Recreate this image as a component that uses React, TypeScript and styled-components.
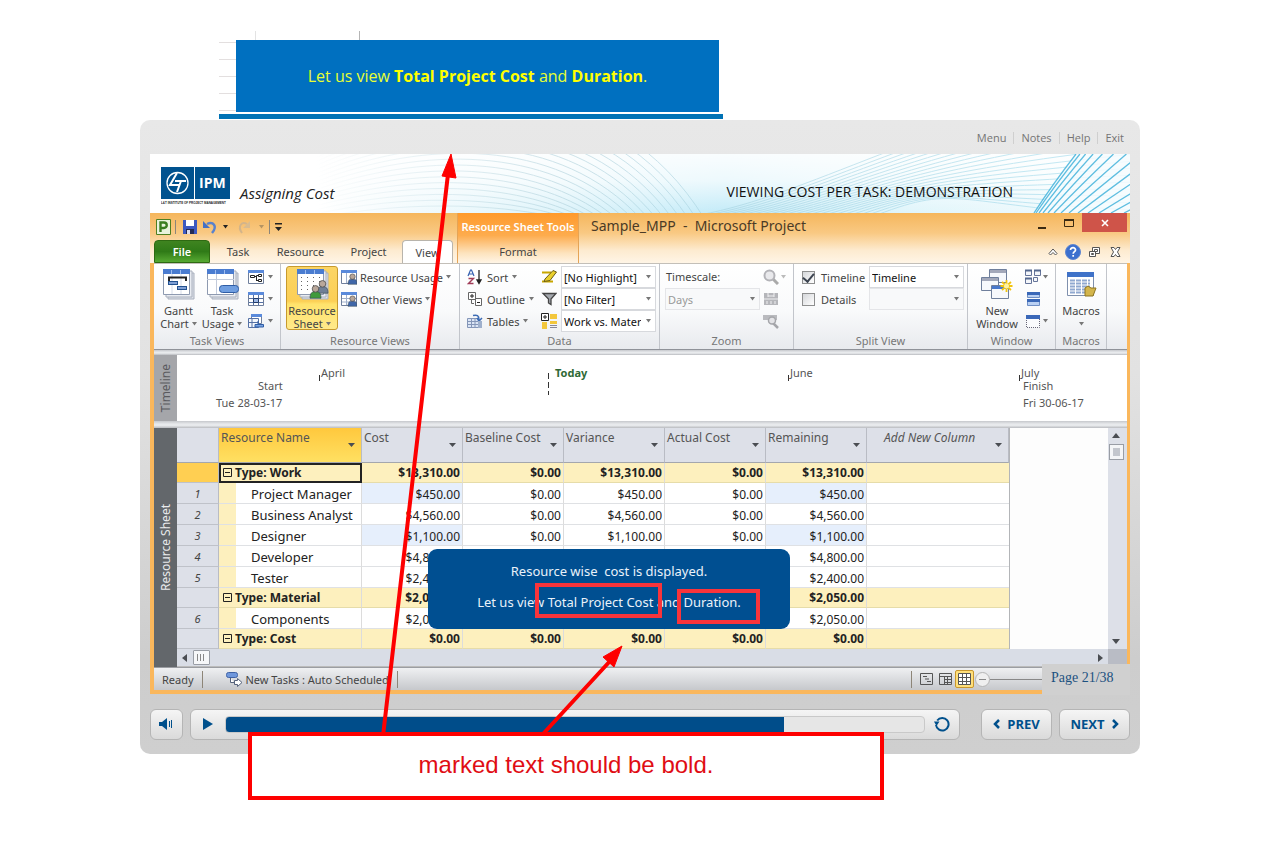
import React from "react";
import styled, { createGlobalStyle, css } from "styled-components";

const ui = `"Noto Sans", "Open Sans", sans-serif`;

const GlobalStyle = createGlobalStyle`
  * { box-sizing: border-box; }
  body { margin: 0; background: #fff; font-family: ${ui}; font-size: 11px; color: #444; }
  button, select, input { font: inherit; color: inherit; margin: 0; padding: 0; border: 0; background: none; }
  svg { display: block; flex: none; }
  h1, h2, p { margin: 0; font-weight: 400; }
`;

const Stage = styled.main`
  position: relative;
  width: 1000px;
  max-width: 100%;
  margin: 0 auto;
  padding: 31px 0 64px;
`;

/* ---------- banner above the player ---------- */
const BannerStrip = styled.section`
  width: 504px;
  max-width: 100%;
  margin: 0 0 1px 79px;
  padding: 9px 4px 0 17px;
  background:
    linear-gradient(#e3e3e3, #e3e3e3) 36px 0 / 1px 10px no-repeat,
    linear-gradient(#b5b5b5, #b5b5b5) 140px 0 / 1px 10px no-repeat,
    repeating-linear-gradient(#fff 0 16px, #e3dfdf 16px 17px) 0 -5px / 17px 86px no-repeat;
  border-bottom: 5px solid #0072b5;
`;
const BannerBox = styled.p`
  height: 72px;
  margin-bottom: 2px;
  background: #0070c0;
  color: #e8ff33;
  display: flex;
  align-items: center;
  justify-content: center;
  white-space: pre;
  font-size: 16px;
  font-family: "Open Sans", sans-serif;
  b { color: #ffff00; }
`;

/* ---------- player shell ---------- */
const Player = styled.section`
  height: 634px;
  padding: 0 10px;
  border-radius: 10px;
  background: linear-gradient(#e8e8e8, #e2e2e2 40%, #cdcdcd 85%, #cfcfcf);
`;
const TopNav = styled.nav`
  height: 34px;
  display: flex;
  align-items: center;
  justify-content: flex-end;
  padding: 2px 6px 0 0;
  a {
    color: #757575;
    text-decoration: none;
    font: 11px/12px "Open Sans", sans-serif;
    padding: 0 7px;
    border-left: 1px solid #cfcfcf;
  }
  a:first-child { border: 0; }
  a:last-child { padding-right: 0; }
`;
const SlideHeader = styled.header`
  position: relative;
  height: 59px;
  background: #fff;
  overflow: hidden;
  display: flex;
  align-items: flex-start;
  padding: 13px 117px 0 11px;
`;
const HeaderArt = styled.svg`
  position: absolute;
  inset: 0;
  width: 100%;
  height: 100%;
`;
const LogoWrap = styled.div`
  position: relative;
  width: 70px;
`;
const CourseName = styled.h1`
  position: relative;
  margin: 16px 0 0 9px;
  font: italic 15px/20px "Open Sans", sans-serif;
  color: #222;
`;
const SlideTitle = styled.h2`
  position: relative;
  margin: 15px 0 0 auto;
  font: 14px/20px "Open Sans", sans-serif;
  color: #111;
`;

/* ---------- Project window ---------- */
const AppWindow = styled.section`
  height: 481px;
  padding: 0 3px 3px 4px;
  background: #fab75c;
  display: flex;
  flex-direction: column;
`;
const Chrome = styled.div`
  display: flex;
  height: 50px;
  margin: 0 -3px 0 -4px;
  padding: 0 3px 0 4px;
  background: linear-gradient(#f5b65c, #f9c983 40%, #fdebd0 75%, #fff5e6);
`;
const ChromeLeft = styled.div`
  width: 303px;
  display: flex;
  flex-direction: column;
`;
const QuickBar = styled.div`
  height: 27px;
  display: flex;
  align-items: center;
  padding-left: 2px;
  button { display: flex; }
`;
const Bar = styled.i<{ h?: number; m?: number; push?: boolean }>`
  width: 1px;
  height: ${(p) => p.h ?? 14}px;
  margin: 0 ${(p) => p.m ?? 4}px;
  margin-left: ${(p) => (p.push ? "auto" : "")};
  background: #8d8578;
`;
const Tabs = styled.div`
  height: 23px;
  display: flex;
`;
const Tab = styled.button<{ w: number; kind?: "file" | "on" }>`
  width: ${(p) => p.w}px;
  height: 23px;
  ${(p) =>
    p.kind === "file" &&
    css`
      color: #fff;
      font-weight: 600;
      border-radius: 4px 4px 0 0;
      border: 1px solid #2e6a12;
      background: linear-gradient(#3f8420, #2f7a17 50%, #57a932);
    `}
  ${(p) =>
    p.kind === "on" &&
    css`
      border: 1px solid #b8b4ac;
      border-bottom: 0;
      border-radius: 4px 4px 0 0;
      background: #fff;
    `}
`;
const Contextual = styled.div`
  width: 122px;
  border: 1px solid #e5a456;
  border-width: 0 1px;
  background: linear-gradient(#ff9a2b, #fdac4e 45%, #fde3bd 80%, #fff5e6);
  display: flex;
  flex-direction: column;
  align-items: center;
  strong {
    font-size: 11px;
    font-weight: 600;
    line-height: 27px;
    color: #fff;
    white-space: nowrap;
  }
`;
const ChromeRight = styled.div`
  flex: 1;
  display: flex;
  flex-direction: column;
`;
const TitleRow = styled.div`
  display: flex;
  height: 27px;
  align-items: flex-start;
  padding-left: 12px;
  span {
    font-size: 14px;
    line-height: 26px;
    color: #4a3a26;
    white-space: pre;
    flex: 1;
  }
`;
const WinBtn = styled.button<{ $close?: boolean }>`
  width: ${(p) => (p.$close ? 45 : 27)}px;
  height: 19px;
  display: flex;
  align-items: center;
  justify-content: center;
  background: ${(p) => (p.$close ? "#cf5449" : "none")};
`;
const ToolRow = styled.div`
  display: flex;
  justify-content: flex-end;
  align-items: center;
  gap: 7px;
  height: 23px;
  padding-right: 4px;
  button { display: flex; }
`;

const Ribbon = styled.div`
  display: flex;
  height: 87px;
  border-top: 1px solid #c3bfb8;
  border-bottom: 1px solid #8f9299;
  background: linear-gradient(#fff, #f9fafb 55%, #e8eaee);
`;
const Group = styled.div<{ w: number }>`
  width: ${(p) => p.w}px;
  padding-top: 2px;
  border-right: 1px solid #c2c5cb;
  display: flex;
  flex-direction: column;
`;
const GroupBody = styled.div<{ pad?: number; gap?: number }>`
  height: 66px;
  display: flex;
  padding-left: ${(p) => p.pad ?? 0}px;
  gap: ${(p) => p.gap ?? 0}px;
`;
const GroupName = styled.div`
  text-align: center;
  line-height: 17px;
  color: #777;
`;
const Big = styled.button<{ w: number; $on?: boolean }>`
  width: ${(p) => p.w}px;
  height: 64px;
  display: flex;
  flex-direction: column;
  align-items: center;
  padding-top: 2px;
  line-height: 13px;
  white-space: nowrap;
  svg { margin-bottom: 4px; }
  svg.caret { margin: 0; }
  ${(p) =>
    p.$on &&
    css`
      border: 1px solid #c79a2e;
      border-radius: 3px;
      padding-top: 1px;
      background: linear-gradient(#fbd565, #fccf55 55%, #ffe36c 60%, #ffe98a);
    `}
`;
const Inline = styled.span`
  display: flex;
  align-items: center;
  gap: 3px;
  min-height: 13px;
`;
const Stack = styled.div<{ w?: number; ml?: number }>`
  display: flex;
  flex-direction: column;
  width: ${(p) => (p.w ? p.w + "px" : "auto")};
  margin-left: ${(p) => p.ml ?? 0}px;
`;
const Small = styled.button<{ gap?: number }>`
  height: 22px;
  display: flex;
  align-items: center;
  gap: ${(p) => p.gap ?? 4}px;
  white-space: nowrap;
`;
const Slot = styled.div`
  height: 22px;
  line-height: 22px;
  padding-left: 1px;
`;
const SelectWrap = styled.label<{ $dim?: boolean }>`
  width: 95px;
  height: 22px;
  display: grid;
  align-items: center;
  border: 1px solid ${(p) => (p.$dim ? "#e4e5e8" : "#d7d9dd")};
  background: ${(p) => (p.$dim ? "#f8f9fa" : "#fff")};
  color: ${(p) => (p.$dim ? "#999" : "#111")};
  select, svg { grid-area: 1 / 1; }
  select {
    appearance: none;
    width: 100%;
    padding: 0 14px 0 2px;
    overflow: hidden;
  }
  svg { justify-self: end; margin-right: 4px; pointer-events: none; }
`;
const Check = styled.label`
  height: 22px;
  display: flex;
  align-items: center;
  gap: 6px;
  input {
    appearance: none;
    width: 13px;
    height: 13px;
    border: 1px solid #8e8f8f;
    background: linear-gradient(135deg, #d5d7da, #fff);
    display: grid;
    place-items: center;
  }
  input:checked::after {
    content: "";
    width: 5px;
    height: 9px;
    margin-top: -2px;
    border: solid #3c4450;
    border-width: 0 2px 2px 0;
    rotate: 40deg;
  }
`;

const Gutter = styled.div<{ h: number }>`
  height: ${(p) => p.h}px;
  background: linear-gradient(#c6c8cc, #e4e6e9 40%, #eceef0 60%, #b9bbbf);
`;
const Pane = styled.div<{ h: number }>`
  display: flex;
  height: ${(p) => p.h}px;
  background: #fff;
`;
const PaneTab = styled.div<{ $dark?: boolean }>`
  width: 23px;
  display: flex;
  align-items: center;
  justify-content: center;
  background: ${(p) => (p.$dark ? "#63676b" : "#a5a6aa")};
  color: ${(p) => (p.$dark ? "#e9eaec" : "#5a5a5e")};
  font-size: 12px;
  span { writing-mode: vertical-rl; rotate: 180deg; }
`;
const TimeCanvas = styled.div`
  position: relative;
  flex: 1;
`;
const Mark = styled.span<{ x: number; y: number; $today?: boolean }>`
  position: absolute;
  left: ${(p) => p.x}px;
  top: ${(p) => p.y}px;
  line-height: 14px;
  white-space: nowrap;
  color: ${(p) => (p.$today ? "#2f6a35" : "#555")};
  font-weight: ${(p) => (p.$today ? 700 : 400)};
`;
const Tick = styled.i<{ x: number; h: number }>`
  position: absolute;
  left: ${(p) => p.x}px;
  top: ${(p) => (p.h > 10 ? 18 : 20)}px;
  width: 1px;
  height: ${(p) => p.h}px;
  background: repeating-linear-gradient(#333 0 6px, transparent 6px 9px);
`;

const SheetArea = styled.div`
  flex: 1;
  display: flex;
  flex-direction: column;
  background: #fdfdfd;
`;
const SheetMain = styled.div`
  display: flex;
  height: 221px;
`;
const TableHolder = styled.div`
  flex: 1;
  overflow: hidden;
`;
const Table = styled.table`
  width: 833px;
  table-layout: fixed;
  border-collapse: separate;
  border-spacing: 0;
  border-right: 1px solid #b3b5b8;
  color: #222;
  th, td { padding: 0; white-space: nowrap; overflow: hidden; }
`;
const HeadCell = styled.th<{ $hot?: boolean; $add?: boolean }>`
  height: 35px;
  border-right: 1px solid #b9bcc4;
  border-bottom: 1px solid #a4a7ad;
  background: ${(p) => (p.$hot ? "linear-gradient(#ffc83d, #ffe062)" : "#dde0e8")};
  font-weight: 400;
  font-size: 12px;
  font-style: ${(p) => (p.$add ? "italic" : "normal")};
  color: #555;
  vertical-align: top;
  div {
    display: flex;
    justify-content: space-between;
    padding: 2px 6px 0 ${(p) => (p.$add ? 17 : 2)}px;
    line-height: 16px;
  }
  svg { margin-top: 13px; }
`;
const NumCell = styled.th<{ $hot?: boolean }>`
  background: ${(p) => (p.$hot ? "#ffcf52" : "#dde0e8")};
  border-right: 1px solid #b9bcc4;
  border-bottom: 1px solid #bfc2c9;
  font-weight: 400;
  font-style: italic;
  font-size: 11px;
  color: #444;
`;
const NameCell = styled.th<{ $group?: boolean; $active?: boolean }>`
  text-align: left;
  border-right: 1px solid #dcdcdc;
  border-bottom: 1px solid ${(p) => (p.$group ? "#e6dca9" : "#dfe1e4")};
  font-size: ${(p) => (p.$group ? 12 : 13)}px;
  font-weight: ${(p) => (p.$group ? 700 : 400)};
  line-height: 18px;
  background: ${(p) => (p.$group ? "#fdf0be" : "linear-gradient(90deg, #fdf0be 17px, #fff 17px)")};
  outline: ${(p) => (p.$active ? "2px solid #222" : "none")};
  outline-offset: -2px;
  div {
    display: flex;
    align-items: center;
    gap: 3px;
    padding-left: ${(p) => (p.$group ? 4 : 32)}px;
    padding-top: ${(p) => (p.$group ? 0 : 1)}px;
  }
`;
const MoneyCell = styled.td<{ $group?: boolean; $blue?: boolean; $last?: boolean }>`
  text-align: right;
  border-right: ${(p) => (p.$last ? "0" : "1px solid #dcdcdc")};
  border-bottom: 1px solid ${(p) => (p.$group ? "#e6dca9" : "#dfe1e4")};
  font-size: 12px;
  line-height: 17px;
  font-weight: ${(p) => (p.$group ? 700 : 400)};
  background: ${(p) => (p.$group ? "#fdf0be" : p.$blue ? "#e6effc" : "#fff")};
  && {
    padding-right: 2px;
    padding-top: ${(p) => (p.$group ? 0 : 2)}px;
  }
`;
const Row = styled.tr<{ $group?: boolean }>`
  height: ${(p) => (p.$group ? 20 : 21)}px;
`;
const VScroll = styled.div`
  width: 19px;
  padding: 5px 3px 5px 0;
  display: flex;
  flex-direction: column;
  align-items: center;
  gap: 6px;
  background: #dde0e8;
  svg:last-child { margin-top: auto; }
`;
const ThumbV = styled.i`
  width: 15px;
  height: 16px;
  border: 1px solid #999da5;
  background: #c3c6cd content-box;
  padding: 3px;
  box-shadow: inset 0 0 0 3px #f4f5f7;
`;
const HScroll = styled.div`
  height: 18px;
  display: flex;
  align-items: center;
  padding: 0 24px 0 5px;
  gap: 6px;
  background: linear-gradient(#b9bcc5, #b9bcc5) right / 19px 100% no-repeat, #d9dde6;
  border-bottom: 1px solid #bbb;
  svg:last-child { margin-left: auto; }
`;
const ThumbH = styled.i`
  width: 17px;
  height: 15px;
  border: 1px solid #999da5;
  border-radius: 1px;
  padding: 3px;
  background: repeating-linear-gradient(90deg, #888 0 1px, #f6f7f9 1px 3px) content-box, #f6f7f9;
`;
const Status = styled.div`
  height: 23px;
  display: flex;
  align-items: center;
  padding: 0 85px 0 8px;
  border-top: 1px solid #9b9da2;
  background: linear-gradient(#eff0f2, #c6c8cc);
  white-space: nowrap;
`;
const ViewBtn = styled.button<{ $on?: boolean }>`
  width: 19px;
  height: 18px;
  display: flex;
  align-items: center;
  justify-content: center;
  border: ${(p) => (p.$on ? "1px solid #c9972c" : "0")};
  border-radius: 2px;
  background: ${(p) => (p.$on ? "#ffdf7a" : "none")};
`;
const Zoomer = styled.i`
  width: 52px;
  height: 1px;
  background: #888;
`;

/* ---------- player controls ---------- */
const Controls = styled.div`
  display: flex;
  align-items: center;
  height: 60px;
`;
const pill = css`
  height: 31px;
  border: 1px solid #b5b5b5;
  border-radius: 6px;
  background: linear-gradient(#f5f5f5, #dadada);
  display: flex;
  align-items: center;
  justify-content: center;
`;
const Pill = styled.button<{ w: number; ml?: number }>`
  ${pill}
  width: ${(p) => p.w}px;
  margin-left: ${(p) => p.ml ?? 0}px;
  gap: 7px;
  color: #00508c;
  font: 700 13px/16px "Open Sans", sans-serif;
`;
const Seek = styled.div`
  ${pill}
  flex: 1;
  margin: 0 21px 0 7px;
  padding: 0 9px 0 12px;
  button { display: flex; }
`;
const SeekBar = styled.input`
  && {
    appearance: none;
    flex: 1;
    min-width: 0;
    height: 17px;
    margin: 0 9px 0 12px;
    border: 1px solid #c9c9c9;
    border-radius: 4px;
    background: linear-gradient(90deg, #004d8a 80%, #e6e6e6 80%);
  }
  &::-webkit-slider-thumb { appearance: none; width: 1px; height: 1px; }
`;

/* ---------- things that lie over the player ---------- */
const PageBox = styled.div`
  position: absolute;
  left: 902px;
  top: 664px;
  width: 88px;
  height: 31px;
  padding: 5px 9px;
  background: #d0d0d0;
  color: #1c5180;
  font: 14px/17px "Liberation Serif", serif;
`;
const Popup = styled.div`
  position: absolute;
  left: 288px;
  top: 549px;
  width: 362px;
  height: 80px;
  border-radius: 9px;
  background: #004f91;
  color: #eaf2fa;
  text-align: center;
  white-space: pre;
  padding: 7px 0;
  font: 13px/31px "Noto Sans", sans-serif;
`;
const Marker = styled.i<{ x: number; y: number; w: number }>`
  position: absolute;
  left: ${(p) => p.x}px;
  top: ${(p) => p.y}px;
  width: ${(p) => p.w}px;
  height: 35px;
  border: 4px solid #f9343b;
`;
const Arrows = styled.svg`
  position: absolute;
  left: 0;
  top: 0;
  pointer-events: none;
`;
const Callout = styled.p`
  position: absolute;
  left: 108px;
  top: 732px;
  width: 636px;
  height: 68px;
  border: 4px solid #fe0000;
  background: #fff;
  color: #e00d14;
  text-align: center;
  font: 24px/58px "Liberation Sans", sans-serif;
`;

/* ---------- icons ---------- */
const Caret = ({ c = "#777" }: { c?: string }) => (
  <svg className="caret" width="5" height="4" viewBox="0 0 5 4"><path d="M0 0h5L2.500 3.500z" fill={c} /></svg>
);
const Tri = ({ d, w = 8, h = 5 }: { d: string; w?: number; h?: number }) => (
  <svg width={w} height={h} viewBox={`0 0 ${w} ${h}`}><path d={d} fill="#4a4d52" /></svg>
);
const Down = () => <Tri w={7} h={4} d="M0 0h7L3.500 4z" />;

const SheetBack = ({ children }: { children?: React.ReactNode }) => (
  <svg width="33" height="32" viewBox="0 0 33 32">
    <path d="M6 5h26v26H6z" fill="#dde1e9" stroke="#a9b0bd" />
    <path d="M4 3h26v26H4z" fill="#e9ecf2" stroke="#a9b0bd" />
    <path d="M1.500 1.500h26v25h-26z" fill="#fff" stroke="#8e9ab0" />
    <path d="M1 1h27v5H1z" fill="#4a7cd0" />
    <path d="M9.500 2v4M18.500 2v4" stroke="#9dbcf0" />
    {children}
  </svg>
);
const GanttIcon = () => (
  <SheetBack>
    <path d="M10 6v20M19 6v20" stroke="#d4dbe8" />
    <path d="M6 9.500h19M7 9v4M24 9v4" stroke="#222" strokeWidth="2" />
    <rect x="6.500" y="13.500" width="9" height="3" fill="#7f9fd4" stroke="#23518f" />
    <rect x="15.500" y="18.500" width="9" height="3" fill="#7f9fd4" stroke="#23518f" />
  </SheetBack>
);
const UsageIcon = () => (
  <SheetBack>
    <path d="M10.500 6v20M1 11.500h27" stroke="#c3cbdb" />
    <rect x="13.500" y="17.500" width="19" height="7" rx="3" fill="#6f9ee0" stroke="#2f5da5" />
  </SheetBack>
);
const Person = ({ x, y, c, s = 1 }: { x: number; y: number; c: string; s?: number }) => (
  <g transform={`translate(${x} ${y}) scale(${s})`}>
    <path d="M0 12c0-5 2-6 5-6s5 1 5 6z" fill={c} stroke="#3b4a55" strokeWidth=".6" />
    <circle cx="5" cy="3.500" r="3" fill="#b9a79a" stroke="#4a4a4a" strokeWidth=".7" />
  </g>
);
const ResourceIcon = () => (
  <SheetBack>
    <path d="M5 9.500h20M5 13.500h20M5 17.500h20M5 21.500h20" stroke="#666" strokeDasharray="1 5" />
    <Person x={21} y={12} c="#6f7f96" s={1.1} />
    <Person x={14} y={17} c="#3f9a3c" s={1.1} />
  </SheetBack>
);
const MiniSheet = ({ children }: { children?: React.ReactNode }) => (
  <svg width="16" height="16" viewBox="0 0 16 16">
    <path d="M.5 1.500h15v13H.5z" fill="#fff" stroke="#6f7f9c" />
    <path d="M0 1h16v3H0z" fill="#5a8adb" />
    {children}
  </svg>
);
const NetIcon = () => (
  <MiniSheet><path d="M2.500 6.500h4v2h-4zM10.500 5.500h3v2h-3zM10.500 10.500h3v2h-3zM8.500 12v-5.500h2M6.500 7.500h2M8.500 11.500h2" fill="none" stroke="#222" /></MiniSheet>
);
const CalIcon = () => (
  <MiniSheet><path d="M1 7.500h14M1 11.500h14M5.500 4v10M10.500 4v10" stroke="#5571a5" /><path d="M5.500 7.500h5v4h-5z" fill="#9db8e6" stroke="#223a66" /></MiniSheet>
);
const FormIcon = () => (
  <svg width="16" height="16" viewBox="0 0 16 16">
    <path d="M3.500 1.500h10v9h-10z" fill="#fff" stroke="#6f7f9c" /><path d="M3 1h11v3H3z" fill="#5a8adb" />
    <path d="M.5 5.500h10v9H.5zM4 6v8M1 9.500h9" fill="#f4f7fc" stroke="#5571a5" />
    <path d="M10 8v3M7 11.500h8.500v2.500H7z" fill="#7aa3e2" stroke="#2f5da5" />
  </svg>
);
const PersonSheet = ({ tall }: { tall?: boolean }) => (
  <MiniSheet><path d={tall ? "M5.500 4v10M1 7.500h14M1 11h8" : "M5.500 4v10"} stroke="#9fb0cc" /><Person x={7} y={4.500} c="#3f66a8" s={0.900} /></MiniSheet>
);
const SortIcon = () => (
  <svg width="16" height="16" viewBox="0 0 16 16">
    <path d="M1 7 3.500 1h1L7 7M2 5h4" fill="none" stroke="#3560b0" strokeWidth="1.200" />
    <path d="M1.500 9.500h5l-5 5h5" fill="none" stroke="#a03c58" strokeWidth="1.400" />
    <path d="M12 1v11M10 11l2 3.500 2-3.500z" fill="#222" stroke="#222" strokeWidth="1.300" />
  </svg>
);
const OutlineIcon = () => (
  <svg width="16" height="16" viewBox="0 0 16 16" fill="#fff" stroke="#666">
    <path d="M4.500 9v3.500H7" fill="none" /><path d="M1.500 1.500h7v7h-7zM8.500 7.500h6v7h-6z" /><path d="M3 5h4M5 3v4M10 11.500h3" stroke="#222" />
  </svg>
);
const TablesIcon = () => (
  <svg width="16" height="16" viewBox="0 0 16 16">
    <path d="M.5 5.500h11v9H.5zM1 8.500h10M1 11.500h10M4.500 6v8M8 6v8" fill="#dbe5f5" stroke="#8496b8" />
    <path d="M6 2.500c4-1 6 0 6 4M10 5l2 3 3-3" fill="none" stroke="#3d6cb5" strokeWidth="1.500" /><path d="M11 8h4v7h-4z" fill="#9fb0cc" />
  </svg>
);
const PenIcon = () => (
  <svg width="16" height="16" viewBox="0 0 16 16"><path d="M1 3.500h9M1 12.500h11" stroke="#c7a600" strokeWidth="2" fill="none" /><path d="m4 10 8-8.500 3.500 1.500-6.500 8.500-6 1z" fill="#e9cf2c" stroke="#6a5b15" /></svg>
);
const FunnelIcon = () => (
  <svg width="16" height="16" viewBox="0 0 16 16"><path d="M2 2.500h13L10 8v5.500L7.500 12V8z" fill="#a3a7ad" stroke="#444" strokeWidth="1.300" /></svg>
);
const GroupIcon = () => (
  <svg width="16" height="16" viewBox="0 0 16 16"><path d="M1 9h5v7H1zM9 1h7v5H9zM9 8h7v3H9z" fill="#f3c73c" /><path d="M9 12.500h7M9 14.500h7" stroke="#889" /><path d="M.5.500h7v7h-7z" fill="#fff" stroke="#222" /><path d="M2 4h4M4 2v4" stroke="#222" /></svg>
);
const Magnifier = () => (
  <svg width="16" height="16" viewBox="0 0 16 16"><path d="m10 10 5 5" stroke="#aaa" strokeWidth="3" /><circle cx="6.500" cy="6.500" r="5" fill="#e9e9ec" stroke="#b3b3b8" strokeWidth="2" /></svg>
);
const ZoomSheet = () => (
  <svg width="16" height="16" viewBox="0 0 16 16"><path d="M1 2h14v12H1z" fill="#b5b6ba" /><path d="M1 8h14M5 2v4M11 2v4M4 10v3M8 10v3M12 10v3M5 5h6" stroke="#f0f0f2" /></svg>
);
const ZoomSel = () => (
  <svg width="16" height="16" viewBox="0 0 16 16"><path d="M0 2h14v5H0z" fill="#b9babe" /><path d="m10 10 5 5" stroke="#a5a6aa" strokeWidth="2.500" /><circle cx="9" cy="7.500" r="3.500" fill="#e4e4e7" stroke="#a5a6aa" strokeWidth="1.500" /></svg>
);
const WindowsIcon = () => (
  <svg width="34" height="32" viewBox="0 0 34 32">
    {[[9, 1, "#a3a8ba"], [1, 9, "#a3a8ba"], [11, 17, "#4878cc"]].map(([x, y, c]) => (
      <g key={String(x)} transform={`translate(${x} ${y})`}><path d="M.5.500h17v13H.5z" fill="#f6f8fc" stroke="#6f7f9c" /><path d="M1 1h16v3H1z" fill={String(c)} /></g>
    ))}
    <path d="M26.500 12v12M20.500 18h12M22 14l9 8M31 14l-9 8" stroke="#f1c40f" strokeWidth="1.800" /><circle cx="26.500" cy="18" r="2.500" fill="#fff3a0" />
  </svg>
);
const SwitchWin = () => (
  <svg width="16" height="16" viewBox="0 0 16 16" fill="#f4f6fa" stroke="#66759a"><path d="M.5 1.500h6v5h-6zM9.500 1.500h6v5h-6zM.5 9.500h6v5h-6zM8.500 8.500h4v4h-4z" /><path d="M0 1.500h7M9 1.500h7M0 9.500h7" stroke="#55688f" strokeWidth="2" /></svg>
);
const ArrangeIcon = () => (
  <svg width="16" height="16" viewBox="0 0 16 16"><path d="M2.500 1.500h12v5h-12zM2.500 9.500h12v5h-12z" fill="#b9d0f3" stroke="#6f8fc5" /><path d="M2 1h13v3H2zM2 8h13v3H2z" fill="#3a68b8" /></svg>
);
const HideIcon = () => (
  <svg width="16" height="16" viewBox="0 0 16 16"><path d="M1.500 5v9.500h13V5" fill="#fafbfd" stroke="#667" strokeDasharray="1 1" /><path d="M1 2h14v4H1z" fill="#3a68b8" /></svg>
);
const MacrosIcon = () => (
  <svg width="32" height="32" viewBox="0 0 32 32">
    <path d="M2.500 4.500h26v23h-26z" fill="#fff" stroke="#7f90ad" /><path d="M2 4h27v5H2z" fill="#3f72c8" />
    <path d="M5 12.500h20M5 15.500h20M5 18.500h20M5 21.500h20M5 24.500h16" stroke="#8fa8d0" strokeWidth="2" strokeDasharray="5 1" />
    <path d="M20 28V20l3-2 3 2h5l-3 8z" fill="#d3b54c" stroke="#8d7420" />
  </svg>
);

const archCurves = Array.from({ length: 19 }, (_, i) =>
  `M165 ${64 - i * 4}C${250 + i * 3} ${48 - i * 7} ${340 + i * 7} ${48 - i * 7} ${410 + i * 8} 64`
);
const sweepCurves = Array.from({ length: 22 }, (_, i) =>
  `M${530 + i * 9} 64C${640 + i * 8} ${50 - i} ${730 + i * 3} ${-14 + i * 3} 985 ${-84 + i * 7}`
);
const cornerLines = Array.from({ length: 15 }, (_, i) => {
  const b = 884 + i * 1.5 + i * i * 0.5;
  const t = 926 + i * 3 + i * i * 0.9;
  return `M${b} 59Q${(b + t) / 2 - 3} 31 ${t} 0`;
});

const Art = () => (
  <HeaderArt viewBox="0 0 980 59" preserveAspectRatio="none">
    <defs>
      <linearGradient id="wash" x1="0" x2="1"><stop offset="0" stopColor="#fff" /><stop offset=".3" stopColor="#dcf3fa" /><stop offset=".5" stopColor="#c3ebf8" /><stop offset=".72" stopColor="#dff5fb" /><stop offset="1" stopColor="#f4fbfd" /></linearGradient>
      <linearGradient id="lift" x1="0" x2="0" y1="0" y2="1"><stop offset="0" stopColor="#fff" stopOpacity=".9" /><stop offset=".45" stopColor="#fff" stopOpacity=".7" /><stop offset="1" stopColor="#fff" stopOpacity="0" /></linearGradient>
      <linearGradient id="fade" gradientUnits="userSpaceOnUse" x1="165" x2="980" y1="0" y2="0"><stop offset="0" stopColor="#a9cdd8" stopOpacity="0" /><stop offset=".3" stopColor="#a9cdd8" /><stop offset="1" stopColor="#93d8ed" /></linearGradient>
    </defs>
    <path d="M170 0h810v59H170z" fill="url(#wash)" />
    <path d="M170 0h810v59H170z" fill="url(#lift)" />
    <g fill="none" stroke="url(#fade)" opacity=".55">{[...archCurves, ...sweepCurves].map((d) => <path key={d} d={d} />)}</g>
    <path d="M884 59 926 0h54v59z" fill="#f6fcfe" opacity=".85" />
    <g fill="none" stroke="#45b4dc" strokeWidth="1.300" opacity=".85">{cornerLines.map((d) => <path key={d} d={d} />)}</g>
  </HeaderArt>
);

const Logo = () => (
  <svg width="70" height="38" viewBox="0 0 70 38" role="img" aria-label="L&T IPM">
    <path d="M0 0h69v32H0z" fill="#00528f" /><path d="M33.500 0v32" stroke="#fff" />
    <g fill="none" stroke="#fff"><circle cx="16.500" cy="16" r="10.500" strokeWidth="1.300" /><path d="M16 6 9 18h10M14 14h11M20 14l-4 11" strokeWidth="2" /></g>
    <text x="38" y="21" fill="#fff" fontFamily="Open Sans" fontWeight="700" fontSize="14">IPM</text>
    <text x="0" y="37" fill="#222" fontFamily="Liberation Sans" fontWeight="700" fontSize="3">L&amp;T INSTITUTE OF PROJECT MANAGEMENT</text>
  </svg>
);

/* ---------- data ---------- */
type R = { n?: number; name: string; v: string; group?: boolean; active?: boolean };
const rows: R[] = [
  { name: "Type: Work", v: "$13,310.00", group: true, active: true },
  { n: 1, name: "Project Manager", v: "$450.00" },
  { n: 2, name: "Business Analyst", v: "$4,560.00" },
  { n: 3, name: "Designer", v: "$1,100.00" },
  { n: 4, name: "Developer", v: "$4,800.00" },
  { n: 5, name: "Tester", v: "$2,400.00" },
  { name: "Type: Material", v: "$2,050.00", group: true },
  { n: 6, name: "Components", v: "$2,050.00" },
  { name: "Type: Cost", v: "$0.00", group: true },
];
const heads = ["Cost", "Baseline Cost", "Variance", "Actual Cost", "Remaining"];

const Pick = ({ label, value, dim }: { label: string; value?: string; dim?: boolean }) => (
  <SelectWrap $dim={dim}>
    <select aria-label={label}>{value && <option>{value}</option>}</select>
    <Caret />
  </SelectWrap>
);

export default function App() {
  return (
    <>
      <GlobalStyle />
      <Stage>
        <BannerStrip>
          <BannerBox><span>Let us view <b>Total Project Cost</b> and <b>Duration</b>.</span></BannerBox>
        </BannerStrip>

        <Player>
          <TopNav>
            <a href="#menu">Menu</a><a href="#notes">Notes</a><a href="#help">Help</a><a href="#exit">Exit</a>
          </TopNav>
          <SlideHeader>
            <Art />
            <LogoWrap><Logo /></LogoWrap>
            <CourseName>Assigning Cost</CourseName>
            <SlideTitle>VIEWING COST PER TASK: DEMONSTRATION</SlideTitle>
          </SlideHeader>

          <AppWindow>
            <Chrome>
              <ChromeLeft>
                <QuickBar>
                  <svg width="15" height="16" viewBox="0 0 15 16"><path d="M.5.500h14v15H.5z" fill="#e9f3dc" stroke="#4f7f22" /><path d="M4.500 13V3.500h3.500a2.500 2.500 0 0 1 0 5.500H5" fill="none" stroke="#3a7d1e" strokeWidth="2.400" /></svg>
                  <Bar />
                  <button aria-label="Save"><svg width="22" height="16" viewBox="0 0 22 16"><path d="M3 1h14v14H3z" fill="#3c59c0" /><path d="M6 1h8v6H6z" fill="#fff" /><path d="M6 10h8v5H6z" fill="#222b55" /><path d="M7 11h3v4H7z" fill="#dde" /></svg></button>
                  <button aria-label="Undo"><svg width="16" height="14" viewBox="0 0 16 14"><path d="M5 4c6-3 11 2 5 9" fill="none" stroke="#5a82cc" strokeWidth="2.500" /><path d="M1 1v7h7z" fill="#4471c4" /></svg></button>
                  <Bar h={0} m={2} /><Caret c="#222" /><Bar h={0} m={4} />
                  <button aria-label="Redo"><svg width="15" height="14" viewBox="0 0 15 14"><path d="M10 4C5 1 0 6 5 13" fill="none" stroke="#d3b48a" strokeWidth="2" /><path d="M13 1v7H6z" fill="#d9bb8f" /></svg></button>
                  <Bar h={0} m={3} /><Caret c="#b59462" /><Bar m={5} />
                  <svg width="7" height="8" viewBox="0 0 7 8"><path d="M0 0h7v1.500H0zM0 4h7L3.500 8z" fill="#222" /></svg>
                </QuickBar>
                <Tabs>
                  <Tab w={56} kind="file">File</Tab>
                  <Tab w={56}>Task</Tab>
                  <Tab w={69}>Resource</Tab>
                  <Tab w={67}>Project</Tab>
                  <Tab w={51} kind="on">View</Tab>
                </Tabs>
              </ChromeLeft>
              <Contextual>
                <strong>Resource Sheet Tools</strong>
                <Tab w={100}>Format</Tab>
              </Contextual>
              <ChromeRight>
                <TitleRow>
                  <span>Sample_MPP  -  Microsoft Project</span>
                  <WinBtn aria-label="Minimize"><svg width="8" height="12"><path d="M0 11h8" stroke="#3a2a12" strokeWidth="2" /></svg></WinBtn>
                  <WinBtn aria-label="Maximize"><svg width="10" height="8"><path d="M.5 1h9v6.500h-9z" fill="none" stroke="#3a2a12" /><path d="M0 1h10" stroke="#3a2a12" strokeWidth="2" /></svg></WinBtn>
                  <WinBtn $close aria-label="Close"><svg width="8" height="8"><path d="m1 1 6 6M7 1 1 7" stroke="#fff" strokeWidth="1.600" /></svg></WinBtn>
                </TitleRow>
                <ToolRow>
                  <button aria-label="Collapse ribbon"><svg width="10" height="8" viewBox="0 0 10 8"><path d="M1 5.500 5 1l4 4.500-1.500 1.500L5 4.500 2.500 7z" fill="#fff" stroke="#555" /></svg></button>
                  <button aria-label="Help"><svg width="16" height="16" viewBox="0 0 16 16"><circle cx="8" cy="8" r="7.500" fill="#3b6fce" stroke="#5f86cf" /><path d="M5.500 6c0-3.200 5.200-3 5 0 0 1.600-2.300 1.700-2.300 3.700M8.200 11v1.800" fill="none" stroke="#fff" strokeWidth="1.700" /></svg></button>
                  <button aria-label="Restore"><svg width="13" height="12" viewBox="0 0 13 12"><path d="M4.500 1.500h7v6h-7zM6.500 3.500h3v2h-3z" fill="#fff" stroke="#555" /><path d="M1.500 5.500h6v5h-6zM3.500 7.500h2v1h-2z" fill="#fff" stroke="#555" /></svg></button>
                  <button aria-label="Close document"><svg width="15" height="12" viewBox="0 0 15 12"><path d="M3 1.500h3l1.500 2 1.500-2h3L9.500 6l2.500 4.500H9l-1.500-2-1.500 2H3L5.500 6z" fill="#fff" stroke="#555" /></svg></button>
                </ToolRow>
              </ChromeRight>
            </Chrome>

            <Ribbon>
              <Group w={127}>
                <GroupBody pad={3}>
                  <Big w={43}><GanttIcon />Gantt<Inline>Chart<Caret /></Inline></Big>
                  <Big w={44}><UsageIcon />Task<Inline>Usage<Caret /></Inline></Big>
                  <Stack ml={4}>
                    <Small aria-label="Network diagram"><NetIcon /><Caret /></Small>
                    <Small aria-label="Calendar"><CalIcon /><Caret /></Small>
                    <Small aria-label="Other task views"><FormIcon /><Caret /></Small>
                  </Stack>
                </GroupBody>
                <GroupName>Task Views</GroupName>
              </Group>
              <Group w={179}>
                <GroupBody pad={5} gap={3}>
                  <Big w={52} $on><ResourceIcon />Resource<Inline>Sheet<Caret /></Inline></Big>
                  <Stack>
                    <Small gap={3}><PersonSheet />Resource Usage<Caret /></Small>
                    <Small gap={3}><PersonSheet tall />Other Views<Caret /></Small>
                  </Stack>
                </GroupBody>
                <GroupName>Resource Views</GroupName>
              </Group>
              <Group w={200}>
                <GroupBody pad={7}>
                  <Stack w={74}>
                    <Small><SortIcon />Sort<Caret /></Small>
                    <Small><OutlineIcon />Outline<Caret /></Small>
                    <Small><TablesIcon />Tables<Caret /></Small>
                  </Stack>
                  <Stack w={20}>
                    <Small aria-label="Highlight"><PenIcon /></Small>
                    <Small aria-label="Filter"><FunnelIcon /></Small>
                    <Small aria-label="Group by"><GroupIcon /></Small>
                  </Stack>
                  <Stack>
                    <Pick label="Highlight" value="[No Highlight]" />
                    <Pick label="Filter" value="[No Filter]" />
                    <Pick label="Group by" value="Work vs. Mater" />
                  </Stack>
                </GroupBody>
                <GroupName>Data</GroupName>
              </Group>
              <Group w={134}>
                <GroupBody pad={5} gap={3}>
                  <Stack><Slot>Timescale:</Slot><Pick dim label="Timescale" value="Days" /></Stack>
                  <Stack>
                    <Small gap={2} aria-label="Zoom"><Magnifier /><Caret c="#bbb" /></Small>
                    <Small aria-label="Entire project"><ZoomSheet /></Small>
                    <Small aria-label="Selected tasks"><ZoomSel /></Small>
                  </Stack>
                </GroupBody>
                <GroupName>Zoom</GroupName>
              </Group>
              <Group w={174}>
                <GroupBody pad={8}>
                  <Stack w={67}>
                    <Check><input type="checkbox" defaultChecked />Timeline</Check>
                    <Check><input type="checkbox" />Details</Check>
                  </Stack>
                  <Stack>
                    <Pick label="Timeline view" value="Timeline" />
                    <Pick dim label="Details view" />
                  </Stack>
                </GroupBody>
                <GroupName>Split View</GroupName>
              </Group>
              <Group w={88}>
                <GroupBody pad={6} gap={5}>
                  <Big w={46}><WindowsIcon />New<span>Window</span></Big>
                  <Stack>
                    <Small gap={2} aria-label="Switch windows"><SwitchWin /><Caret /></Small>
                    <Small aria-label="Arrange all"><ArrangeIcon /></Small>
                    <Small gap={2} aria-label="Hide"><HideIcon /><Caret /></Small>
                  </Stack>
                </GroupBody>
                <GroupName>Window</GroupName>
              </Group>
              <Group w={51}>
                <GroupBody pad={2}>
                  <Big w={46}><MacrosIcon />Macros<Inline><Caret /></Inline></Big>
                </GroupBody>
                <GroupName>Macros</GroupName>
              </Group>
            </Ribbon>

            <Gutter h={5} />
            <Pane h={66}>
              <PaneTab><span>Timeline</span></PaneTab>
              <TimeCanvas>
                <Tick x={142} h={6} /><Mark x={144} y={11}>April</Mark>
                <Mark x={81} y={24}>Start</Mark>
                <Mark x={39} y={41}>Tue 28-03-17</Mark>
                <Tick x={371} h={22} /><Mark x={378} y={11} $today>Today</Mark>
                <Tick x={611} h={6} /><Mark x={613} y={11}>June</Mark>
                <Tick x={842} h={6} /><Mark x={844} y={11}>July</Mark>
                <Mark x={846} y={24}>Finish</Mark>
                <Mark x={846} y={41}>Fri 30-06-17</Mark>
              </TimeCanvas>
            </Pane>
            <Gutter h={7} />

            <Pane h={239}>
              <PaneTab $dark><span>Resource Sheet</span></PaneTab>
              <SheetArea>
                <SheetMain>
                  <TableHolder>
                    <Table>
                      <colgroup>
                        <col width="42" /><col width="143" />
                        {heads.map((h) => <col key={h} width="101" />)}
                        <col width="142" />
                      </colgroup>
                      <thead>
                        <tr>
                          <HeadCell aria-label="Row" />
                          <HeadCell $hot><div>Resource Name<Down /></div></HeadCell>
                          {heads.map((h) => <HeadCell key={h}><div>{h}<Down /></div></HeadCell>)}
                          <HeadCell $add><div>Add New Column<Down /></div></HeadCell>
                        </tr>
                      </thead>
                      <tbody>
                        {rows.map((r) => {
                          const blue = r.n === 1 || r.n === 3;
                          return (
                            <Row key={r.name} $group={r.group}>
                              <NumCell $hot={r.active}>{r.n}</NumCell>
                              <NameCell $group={r.group} $active={r.active}>
                                <div>
                                  {r.group && <svg width="9" height="9"><path d="M.5.500h8v8h-8zM2 4.500h5" fill="none" stroke="#222" /></svg>}
                                  {r.name}
                                </div>
                              </NameCell>
                              <MoneyCell $group={r.group} $blue={blue}>{r.v}</MoneyCell>
                              <MoneyCell $group={r.group}>$0.00</MoneyCell>
                              <MoneyCell $group={r.group}>{r.v}</MoneyCell>
                              <MoneyCell $group={r.group}>$0.00</MoneyCell>
                              <MoneyCell $group={r.group} $blue={blue}>{r.v}</MoneyCell>
                              <MoneyCell $group={r.group} $last />
                            </Row>
                          );
                        })}
                      </tbody>
                    </Table>
                  </TableHolder>
                  <VScroll>
                    <Tri d="M0 5h8L4 0z" /><ThumbV /><Tri d="M0 0h8L4 5z" />
                  </VScroll>
                </SheetMain>
                <HScroll>
                  <Tri w={5} h={8} d="M5 0v8L0 4z" /><ThumbH /><Tri w={5} h={8} d="M0 0v8l5-4z" />
                </HScroll>
              </SheetArea>
            </Pane>

            <Status>
              Ready<Bar h={17} m={8} />
              <Bar h={0} m={7} />
              <svg width="17" height="16" viewBox="0 0 17 16"><rect x=".5" y="1.500" width="11" height="5" rx="2" fill="#6f97dc" stroke="#3f62a5" /><path d="M4.500 7v4.500H8M8.500 9.500h3V7.500l4.500 4-4.500 4v-2h-3z" fill="#fff" stroke="#56637c" /></svg>
              &nbsp;New Tasks : Auto Scheduled<Bar h={17} m={8} />
              <Bar h={17} m={5} push />
              <ViewBtn aria-label="Gantt view"><svg width="13" height="12"><path d="M.5.500h12v11H.5zM3 3.500h4M5 6h4M7 8.500h4" fill="none" stroke="#555" /></svg></ViewBtn>
              <ViewBtn aria-label="Usage view"><svg width="13" height="12"><path d="M.5.500h12v11H.5zM0 3.500h13M5.500 3v9M8.500 3v9M5 6.500h8M5 9.500h8" fill="none" stroke="#555" /></svg></ViewBtn>
              <ViewBtn $on aria-label="Sheet view"><svg width="13" height="12"><path d="M.5.500h12v11H.5zM0 4.500h13M0 8.500h13M4.500 0v12M8.500 0v12" fill="#fff" stroke="#555" /></svg></ViewBtn>
              <Bar h={0} m={0} />
              <svg width="15" height="15"><circle cx="7.500" cy="7.500" r="7" fill="#efefef" stroke="#b5b5b5" /><path d="M4 7.500h7" stroke="#888" /></svg>
              <Zoomer />
            </Status>
          </AppWindow>

          <Controls>
            <Pill w={33} aria-label="Volume">
              <svg width="15" height="12" viewBox="0 0 15 12"><path d="M0 4h3l5-4v12L3 8H0z" fill="#00508c" /><path d="M10.500 3v6M12.500 2v8" stroke="#00508c" /></svg>
            </Pill>
            <Seek>
              <button aria-label="Play"><svg width="10" height="12"><path d="M0 0v12l10-6z" fill="#00508c" /></svg></button>
              <SeekBar type="range" aria-label="Position" min={0} max={100} defaultValue={80} />
              <button aria-label="Replay"><svg width="16" height="16" viewBox="0 0 16 16"><path d="M2 9a6.300 6.300 0 1 0 1.200-4.500" fill="none" stroke="#00508c" strokeWidth="2" /><path d="M0 5.500h5.500L2.500 10z" fill="#00508c" /></svg></button>
            </Seek>
            <Pill w={71}><svg width="7" height="10"><path d="M6 1 2 5l4 4" fill="none" stroke="#00508c" strokeWidth="2.500" /></svg>PREV</Pill>
            <Pill w={71} ml={7}>NEXT<svg width="7" height="10"><path d="m1 1 4 4-4 4" fill="none" stroke="#00508c" strokeWidth="2.500" /></svg></Pill>
          </Controls>
        </Player>

        <PageBox>Page 21/38</PageBox>
        <Popup>{"Resource wise  cost is displayed.\nLet us view Total Project Cost and Duration."}</Popup>
        <Marker x={395} y={583} w={127} />
        <Marker x={537} y={589} w={83} />
        <Arrows width="1000" height="800" viewBox="0 0 1000 800">
          <path d="M243 736 308 174M403 734 471 660" stroke="#fe0000" strokeWidth="4" />
          <path d="M311 154l5 24-14-2z M482 646l-8 21-11-10z" fill="#fe0000" stroke="#fe0000" />
        </Arrows>
        <Callout>marked text should be bold.</Callout>
      </Stage>
    </>
  );
}
